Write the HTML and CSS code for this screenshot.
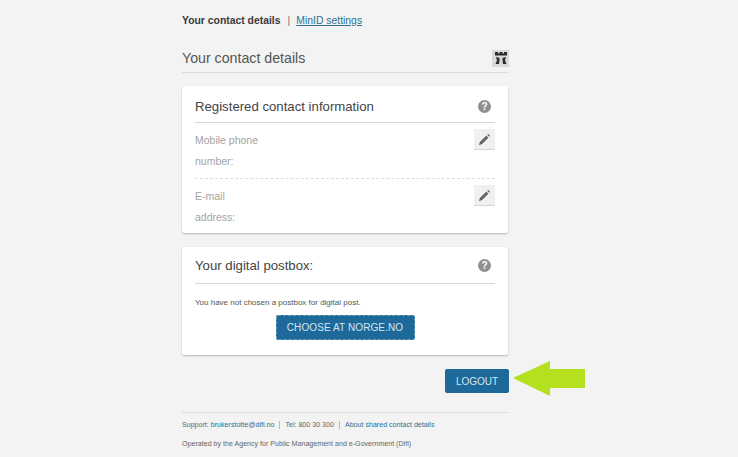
FILE: index.html
```html
<!DOCTYPE html>
<html lang="en">
<head>
  <meta charset="UTF-8">
  <title>Your contact details</title>
  <link rel="stylesheet" href="styles.css">
</head>
<body>

<div class="page">
  <nav class="tabs">
    <strong>Your contact details</strong>
    <span class="tabs-sep">|</span>
    <a href="#">MinID settings</a>
  </nav>

  <div class="page-head">
    <h1>Your contact details</h1>
    <span class="tower">
      <svg width="14" height="14" viewBox="0 0 14 14"><path fill="#2b2b2b" d="M1 1h3v1.500h1.500V1h3v1.500H10V1h3v3.500H1zM2 6l3.500 1v2L5 13H1.500L3 9.500zM12 6l-3.500 1v2L9 13h3.500L11 9.500z"/></svg>
    </span>
  </div>

  <section class="card card-contact">
    <div class="card-head">
      <h2>Registered contact information</h2>
      <span class="help">?</span>
    </div>
    <div class="field">
      <div class="field-label">Mobile phone<br>number:</div>
      <button type="button" class="edit">
        <svg width="13" height="13" viewBox="0 0 14 14"><path fill="#666" d="M1 13l1-3.200 7-7 2.200 2.200-7 7zM10 2l1-1 2 2-1 1z"/></svg>
      </button>
    </div>
    <div class="field field-last">
      <div class="field-label">E-mail<br>address:</div>
      <button type="button" class="edit">
        <svg width="13" height="13" viewBox="0 0 14 14"><path fill="#666" d="M1 13l1-3.200 7-7 2.200 2.200-7 7zM10 2l1-1 2 2-1 1z"/></svg>
      </button>
    </div>
  </section>

  <section class="card card-postbox">
    <div class="card-head">
      <h2>Your digital postbox:</h2>
      <span class="help">?</span>
    </div>
    <p class="note">You have not chosen a postbox for digital post.</p>
    <div class="choose-wrap">
      <a href="#" class="btn btn-choose">CHOOSE AT NORGE.NO</a>
    </div>
  </section>

  <div class="logout-row">
    <a href="#" class="btn btn-logout">LOGOUT</a>
    <svg class="arrow" width="72" height="35" viewBox="0 0 72 35"><path fill="#b5e01e" d="M0 17L37 0v8h35v19H37v8z"/></svg>
  </div>

  <footer class="foot">
    <div class="foot-links">
      <span>Support: <a href="#">brukerstotte@difi.no</a></span>
      <span class="foot-item">Tel: 800 30 300</span>
      <span class="foot-item"><a href="#">About shared contact details</a></span>
    </div>
    <p class="foot-note">Operated by the Agency for Public Management and e-Government (Difi)</p>
  </footer>
</div>

</body>
</html>
```

FILE: styles.css
```css
* {
  margin: 0;
  padding: 0;
  box-sizing: border-box;
}

html, body {
  height: 100%;
  overflow: hidden;
}

body {
  background: #f3f3f3;
  font-family: 'Liberation Sans', Arial, sans-serif;
  color: #444;
}

.page {
  width: 327px;
  margin-left: 182px;
}

.tabs {
  display: flex;
  align-items: center;
  gap: 6px;
  height: 40px;
  font-size: 10.400px;
  color: #3a3a3a;
}

.tabs a {
  color: #2a7194;
}

.tabs-sep {
  color: #777;
  margin-left: 1px;
}

.page-head {
  display: flex;
  justify-content: space-between;
  align-items: center;
  height: 33px;
  padding-top: 4px;
  border-bottom: 1px solid #dcdcdc;
  margin-bottom: 13px;
}

.page-head h1 {
  font-size: 14.200px;
  font-weight: normal;
  color: #555;
}

.tower {
  display: flex;
  justify-content: center;
  align-items: center;
  width: 17px;
  height: 17px;
  background: #d9d9d9;
}

.card {
  width: 326px;
  background: #fff;
  border-radius: 2px;
  padding: 0 13px;
  box-shadow: 0 1px 2px rgba(0, 0, 0, 0.25);
}

.card-contact {
  height: 147px;
  margin-bottom: 14px;
}

.card-contact .card-head {
  padding-top: 4px;
}

.card-postbox {
  height: 108px;
  margin-bottom: 14px;
}

.card-head {
  display: flex;
  justify-content: space-between;
  align-items: center;
  height: 37px;
  border-bottom: 1px solid #d6d6d6;
}

.card-head h2 {
  font-size: 13.200px;
  font-weight: normal;
  color: #444;
}

.help {
  display: flex;
  justify-content: center;
  align-items: center;
  width: 13px;
  height: 13px;
  margin-right: 4px;
  border-radius: 50%;
  background: #8f8f8f;
  color: #fff;
  font-size: 10px;
  font-weight: bold;
}

.field {
  display: flex;
  justify-content: space-between;
  height: 56px;
  padding-top: 7px;
  border-bottom: 1px dashed #ddd;
}

.field-last {
  border-bottom: none;
}

.field-label {
  font-size: 10.500px;
  line-height: 21px;
  color: #a3a3a3;
}

.edit {
  display: flex;
  justify-content: center;
  align-items: center;
  width: 21px;
  height: 21px;
  margin-top: -1px;
  border: none;
  border-bottom: 1px solid #d5d5d5;
  background: #f0f0f0;
}

.note {
  margin-top: 14px;
  font-size: 8px;
  color: #555;
}

.choose-wrap {
  display: flex;
  justify-content: center;
  margin-top: 8px;
}

.btn {
  display: flex;
  justify-content: center;
  align-items: center;
  background: #1d6a9a;
  color: #d4e6f0;
  font-size: 10px;
  text-decoration: none;
  border-radius: 2px;
}

.btn-choose {
  width: 139px;
  height: 25px;
  letter-spacing: 0.1px;
  border: 1px dashed #6f9fbb;
}

.logout-row {
  display: flex;
  justify-content: flex-end;
  align-items: center;
  position: relative;
  height: 24px;
  margin-bottom: 19px;
}

.btn-logout {
  width: 64px;
  height: 24px;
}

.arrow {
  position: absolute;
  left: 331px;
  top: -8px;
}

.foot {
  border-top: 1px solid #dcdcdc;
  padding-top: 7px;
  font-size: 7.100px;
  color: #666;
}

.foot a {
  color: #2a7194;
  text-decoration: none;
}

.foot-links {
  display: flex;
  align-items: center;
  height: 10px;
}

.foot-item {
  margin-left: 5px;
  padding-left: 5px;
  border-left: 1px solid #bbb;
}

.foot-note {
  margin-top: 10px;
}
```
